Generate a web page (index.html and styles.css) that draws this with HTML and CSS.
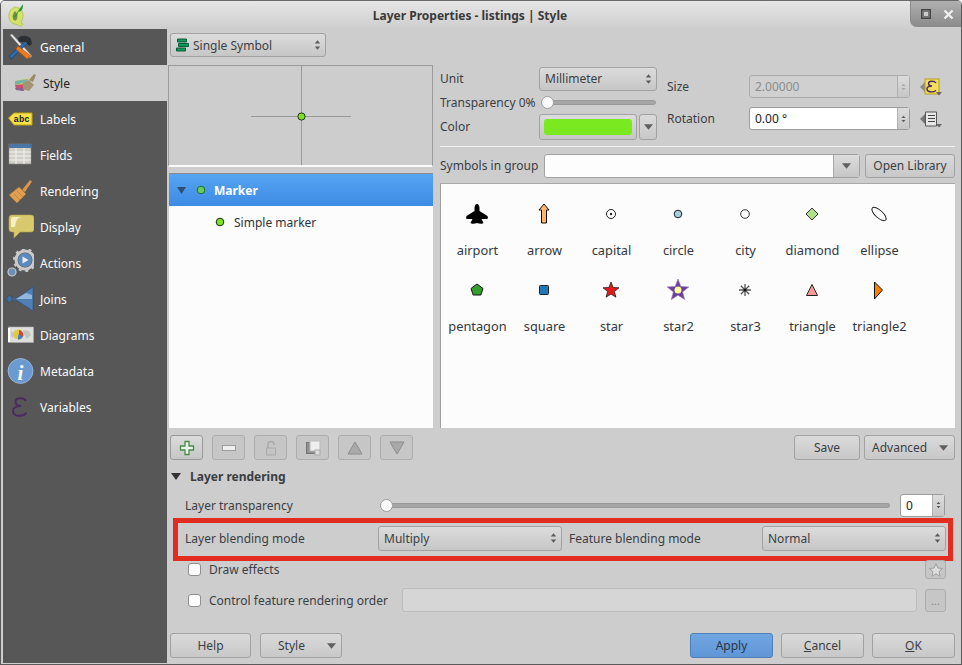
FILE: index.html
```html
<!DOCTYPE html>
<html lang="en">
<head>
<meta charset="utf-8">
<title>Layer Properties - listings | Style</title>
<link rel="stylesheet" href="styles.css">
</head>
<body>
<svg class="defs" aria-hidden="true">
  <symbol id="updown" viewBox="0 0 9 14"><path d="M4.500 1 8 5H1zM1 9h7l-3.500 4z" fill="#5c5c5c"/></symbol>
  <symbol id="down" viewBox="0 0 11 7"><path d="M0 0h11L5.500 7z" fill="#5f5f5f"/></symbol>
</svg>
<div class="window">
  <header class="titlebar">
    <svg class="appicon" viewBox="0 0 18 24"><path d="M8 4C4 5 1 10 2 15c1 4 3 6 6 6l5 2c2 0 3-1 3-2l-2-1c1-3 2-5 2-8 0-3-2-6-4-7z" fill="#d3e26a" stroke="#a9bd45" stroke-width=".7"/><path d="M8 8c-2 2-3 5-2 8 1 2 3 2 4 0 1-3 0-6-2-8z" fill="#7f8f3a"/><path d="M6 15 16 1c0 3 0 5-2 7l-3 1-1 4z" fill="#2f9a35"/></svg>
    <div class="title">Layer Properties - listings | Style</div>
    <div class="winbtns">
      <svg width="10" height="10" viewBox="0 0 10 10"><rect x=".75" y=".75" width="8.500" height="8.500" fill="none" stroke="#444" stroke-width="1.500"/><rect x="2.500" y="2.500" width="5" height="5" fill="#ccc" stroke="#777"/></svg>
      <svg width="11" height="11" viewBox="0 0 11 11"><path d="M1.500 1.500l8 8M9.500 1.500l-8 8" stroke="#eee" stroke-width="2.400"/></svg>
    </div>
  </header>
  <div class="content">
    <nav class="sidebar">
      <div class="navitem"><svg class="navicon" viewBox="0 0 28 28"><path d="M4 2 24 25l2-2L6 1z" fill="#e8e8e8" stroke="#777" stroke-width=".5"/><path d="M22 6 3 23l2 3L24 8z" fill="#2e6cb0" stroke="#173c6a" stroke-width=".7"/><path d="M12 13l-2 3 11 10 4-3z" fill="#f07a1c" stroke="#a94e0c" stroke-width=".6"/><path d="M12 5c4-3 9-3 13 1l1 5-3 2-3-4-4 0-3 0z" fill="#2c2f33"/></svg><span>General</span></div>
      <div class="navitem active"><svg class="navicon" viewBox="0 0 28 28"><path d="M6 12 20 9l-2 8-11 1z" fill="#d8d36a"/><path d="M6 12 19 10l-1 3-12 3z" fill="#76b3a5"/><path d="M6 16l11-1-2 7-8-2z" fill="#c84f72"/><path d="M6 19l9 0-1 3-7-1z" fill="#8c5f8f"/><path d="M14 14l6-3 5 5-5 6-6-2z" fill="#a39474"/><path d="M20 11l5-6 2 1-3 7z" fill="#9a8a68"/></svg><span>Style</span></div>
      <div class="navitem"><svg class="navicon" viewBox="0 0 28 28"><path d="M2.500 13 8 8h18v12H8z" fill="#f4e14a" stroke="#bda10f"/><text x="7.500" y="17" class="abc">abc</text></svg><span>Labels</span></div>
      <div class="navitem"><svg class="navicon" viewBox="0 0 28 28"><rect x="3" y="3" width="22" height="20" fill="#d0d0c8" stroke="#8a8a86" stroke-width=".6"/><rect x="3" y="3" width="22" height="4" fill="#4c76a8"/><path d="M3 11h22M3 15h22M3 19h22M10 7v16M18 7v16" stroke="#f2f2ec"/></svg><span>Fields</span></div>
      <div class="navitem"><svg class="navicon" viewBox="0 0 28 28"><path d="M16 13 24 3l2 1.500L19 15z" fill="#d9954a"/><path d="M3 18 13 10l7 7-9 9z" fill="#e0a050" stroke="#a96f2a" stroke-width=".5"/><path d="M5 20l6 6M8 17l6 6M11 14l6 6" stroke="#b97a33" stroke-width=".7"/></svg><span>Rendering</span></div>
      <div class="navitem"><svg class="navicon" viewBox="0 0 28 28"><path d="M6 2h19q3 0 3 3v11q0 3-3 3H14l-6 6 0-6H6q-3 0-3-3V5q0-3 3-3z" fill="#d9c96e" stroke="#b5a548" stroke-width=".6"/><path d="M6 4h12c-6 0-8 2-9 10H5V6z" fill="#f6efc4"/></svg><span>Display</span></div>
      <div class="navitem"><svg class="navicon" viewBox="0 0 28 28"><circle cx="19" cy="11" r="9" fill="none" stroke="#c9c9c9" stroke-width="3"/><circle cx="19" cy="11" r="11" fill="none" stroke="#c9c9c9" stroke-width="2" stroke-dasharray="3 3.900"/><circle cx="19" cy="11" r="7" fill="#5b8ac0"/><path d="M16.500 7.500v7l6-3.500z" fill="#f0f0f0"/><circle cx="6" cy="23" r="4" fill="#6a8fb8" stroke="#c9c9c9" stroke-width="1.200"/></svg><span>Actions</span></div>
      <div class="navitem"><svg class="navicon" viewBox="0 0 28 28"><path d="M27 2v24l-7-5-1 0-10-7 11-7 7-5z" fill="#4f7fb5" stroke="#23497a" stroke-width=".5"/><path d="M10 14 20 8l6 2v4z" fill="#93b6dc"/><ellipse cx="3.500" cy="14" rx="2.800" ry="3.300" fill="#3f6fa8" stroke="#1f3f6c" stroke-width=".5"/><path d="M6 14h4" stroke="#3f6fa8"/></svg><span>Joins</span></div>
      <div class="navitem"><svg class="navicon" viewBox="0 0 28 28"><rect x="2.500" y="6" width="25" height="15.500" fill="#dedfda" stroke="#aaa" stroke-width=".6"/><path d="M3 7v14" stroke="#fff" stroke-width="2"/><path d="M17 9l6 1 2 4-4 4-3-5zM5 10l3 2-1 5-2-2z" fill="#c4c6c0"/><circle cx="12" cy="13.500" r="5" fill="#e3c947"/><path d="M13 9a5 5 0 0 1 4 7l-4-2z" fill="#c84a3c"/><path d="M12 13.500l5 2a5 5 0 0 1-5 3z" fill="#4a7fbd"/></svg><span>Diagrams</span></div>
      <div class="navitem"><svg class="navicon" viewBox="0 0 28 28"><circle cx="14.500" cy="14" r="12.500" fill="#6a9ad0" stroke="#b9d2ee" stroke-width=".6"/><text x="14.500" y="23" class="info">i</text></svg><span>Metadata</span></div>
      <div class="navitem"><svg class="navicon" viewBox="0 0 28 28"><path d="M20 8C18 4.500 9.500 4 9.500 9c0 2.500 2.500 4 5.500 4-4 0-8 1.500-8 5 0 6 9.500 6 13.500 2" fill="none" stroke="#4b2a63" stroke-width="2"/></svg><span>Variables</span></div>
    </nav>
    <main class="main">
      <div class="toprow">
        <div class="combo rendererbox"><svg class="rendericon" viewBox="0 0 13 14"><path d="M1.500 1h9v3h-9zM2.500 5.500h10v3h-10zM.5 10h9v3h-9z" fill="#0b9c5c" stroke="#0a5c38"/></svg><span class="grow">Single Symbol</span><svg class="arrows"><use href="#updown"/></svg></div>
      </div>
      <div class="split">
        <section class="leftcol">
          <div class="preview"><svg width="265" height="99" viewBox="0 0 265 99"><path d="M132.500 0v99M82 50.500h100" stroke="#9a9a9a"/><circle cx="132.500" cy="50.500" r="3.600" fill="#7ae41f" stroke="#22331a"/></svg></div>
          <div class="tree">
            <div class="treehead"><svg class="twisty" width="9" height="7" viewBox="0 0 9 7"><path d="M0 0h9L4.500 7z" fill="#2f4f72"/></svg><svg width="10" height="10" viewBox="0 0 10 10"><circle cx="5" cy="5" r="3.800" fill="#67cd55" stroke="#1e6a3c"/></svg><b>Marker</b></div>
            <div class="treerow"><svg width="10" height="10" viewBox="0 0 10 10"><circle cx="5" cy="5" r="3.800" fill="#7ae41f" stroke="#1c2a14"/></svg><span>Simple marker</span></div>
          </div>
        </section>
        <section class="rightcol">
          <div class="props">
            <div class="propsleft">
              <div class="prow prow-unit"><span class="plabel">Unit</span><div class="combo unitbox"><span class="grow">Millimeter</span><svg class="arrows"><use href="#updown"/></svg></div></div>
              <div class="prow prow-trans"><span>Transparency 0%</span><div class="slider shortslider"><i class="knob"></i></div></div>
              <div class="prow prow-color"><span class="plabel">Color</span><div class="colorbtn"><i></i></div><div class="btn arrowbtn"><svg class="drop"><use href="#down"/></svg></div></div>
            </div>
            <div class="propsright">
              <div class="srow"><span class="slabel">Size</span><div class="spin disabled"><span class="grow">2.00000</span><div class="stepper"><svg class="arrows faint"><use href="#updown"/></svg></div></div><svg class="ddbtn" viewBox="0 0 24 20"><path d="M1 10l5-5v10z" fill="#8a8a8a"/><rect x="6" y="2" width="14" height="15" fill="#f2dd5c" stroke="#b59f18"/><path d="M17 6C15.500 3.500 9.500 3.500 9.500 6.500c0 1.500 1.500 2.500 3.500 2.500-2.500 0-5 1-5 3 0 3.500 6.500 3.500 9 1.500" fill="none" stroke="#4b2a63" stroke-width="1.400"/><path d="M17 15h6l-3 3.500z" fill="#666"/></svg></div>
              <div class="srow"><span class="slabel">Rotation</span><div class="spin"><span class="grow">0.00 °</span><div class="stepper"><svg class="arrows"><use href="#updown"/></svg></div></div><svg class="ddbtn" viewBox="0 0 24 20"><path d="M1 10l5-5v10z" fill="#777"/><path d="M6.500 3h11v14h-11z" fill="#e8e8e8" stroke="#555"/><path d="M9 6.500h7M9 9.500h7M9 12.500h7" stroke="#444"/><path d="M17 15h6l-3 3.500z" fill="#666"/></svg></div>
            </div>
          </div>
          <div class="hr"></div>
          <div class="grouprow"><span>Symbols in group</span><div class="editcombo"><div class="grow"></div><div class="editdrop"><svg class="drop"><use href="#down"/></svg></div></div><div class="btn libbtn">Open Library</div></div>
          <div class="symbols">
            <div class="sym"><svg viewBox="0 0 24 24"><path d="M12 2c1.500 0 2.500 2 2.500 4v3l8 5c.5 1 .5 2 0 3h-6l2 4c-1 1-4 1-6.500 0-2.500 1-5.500 1-6.500 0l2-4h-6c-.5-1-.5-2 0-3l8-5V6c0-2 1-4 2.500-4z"/></svg><span>airport</span></div>
            <div class="sym"><svg viewBox="0 0 24 24"><path d="M12 2l5 6h-2.500v13h-5V8H7z" fill="#fdb66a" stroke="#111"/></svg><span>arrow</span></div>
            <div class="sym"><svg viewBox="0 0 24 24"><circle cx="12" cy="12" r="4.500" fill="#fff" stroke="#222"/><circle cx="12" cy="12" r="1.200" fill="#222"/></svg><span>capital</span></div>
            <div class="sym"><svg viewBox="0 0 24 24"><circle cx="12" cy="12" r="3.800" fill="#a6cee3" stroke="#222"/></svg><span>circle</span></div>
            <div class="sym"><svg viewBox="0 0 24 24"><circle cx="12" cy="12" r="4.300" fill="#fff" stroke="#333"/></svg><span>city</span></div>
            <div class="sym"><svg viewBox="0 0 24 24"><path d="M12 6l6 6-6 6-6-6z" fill="#b2df8a" stroke="#333"/></svg><span>diamond</span></div>
            <div class="sym"><svg viewBox="0 0 24 24"><ellipse cx="12" cy="12" rx="9" ry="3.700" transform="rotate(42 12 12)" fill="#fff" stroke="#222"/></svg><span>ellipse</span></div>
            <div class="sym"><svg viewBox="0 0 24 24"><path d="M12 6l6 4.500-2.200 6.500H8.200L6 10.500z" fill="#33a02c" stroke="#111"/></svg><span>pentagon</span></div>
            <div class="sym"><svg viewBox="0 0 24 24"><rect x="7.500" y="7.500" width="9" height="9" rx="1" fill="#1f78b4" stroke="#222"/></svg><span>square</span></div>
            <div class="sym"><svg viewBox="0 0 24 24"><path d="M12 4l2.100 5.500 5.900.3-4.600 3.700 1.500 5.700-4.900-3.200-4.900 3.200 1.500-5.700L4 9.800l5.900-.3z" fill="#e31a1c" stroke="#222" stroke-width=".8"/></svg><span>star</span></div>
            <div class="sym"><svg viewBox="0 0 24 24"><path d="M12 1l2.800 7.500 8 .4-6.200 5 2.100 7.700-6.700-4.400-6.700 4.400 2.100-7.700-6.200-5 8-.4z" fill="#6a3d9a" stroke="#9a7ec0" stroke-width=".7"/><circle cx="12" cy="12" r="3.500" fill="#ffff99"/></svg><span>star2</span></div>
            <div class="sym"><svg viewBox="0 0 24 24"><path d="M12 6v12M6 12h12M7.800 7.800l8.400 8.400M16.200 7.800l-8.400 8.400" stroke="#555" stroke-width="1.300"/><circle cx="12" cy="12" r="1.300" fill="#111"/></svg><span>star3</span></div>
            <div class="sym"><svg viewBox="0 0 24 24"><path d="M12 6.500l5.500 11h-11z" fill="#fb9a99" stroke="#222"/></svg><span>triangle</span></div>
            <div class="sym"><svg viewBox="0 0 24 24"><path d="M7.500 4l8 8-8 9z" fill="#ff7f00" stroke="#111"/></svg><span>triangle2</span></div>
          </div>
        </section>
      </div>
      <div class="toolbar">
        <div class="tool tool-on"><svg viewBox="0 0 16 16"><path d="M6 1.500h4v4.500h4.500v4H10v4.500H6V10H1.500V6H6z" fill="#e9f3e6" stroke="#4a8b4d" stroke-width="1.300"/></svg></div>
        <div class="tool"><svg viewBox="0 0 16 16"><rect x="1.500" y="5.500" width="13" height="5" fill="#eee" stroke="#9c9c9c"/></svg></div>
        <div class="tool"><svg viewBox="0 0 16 16"><path d="M5 8V4.500a3 3 0 0 1 6 0V5" fill="none" stroke="#aaa" stroke-width="1.500"/><rect x="3.500" y="8" width="9" height="7" fill="#c4c4c4" stroke="#aaa"/></svg></div>
        <div class="tool"><svg viewBox="0 0 16 16"><rect x="1.500" y="2.500" width="10" height="11" fill="#8f8f8f" stroke="#777"/><rect x="5" y="1" width="10" height="10" fill="#eee" stroke="#bbb"/><rect x="10" y="10" width="5" height="5" fill="#ddd" stroke="#aaa"/></svg></div>
        <div class="tool"><svg viewBox="0 0 16 16"><path d="M8 2l7 12H1z" fill="#a9a9a9" stroke="#8d8d8d"/></svg></div>
        <div class="tool"><svg viewBox="0 0 16 16"><path d="M1 2h14L8 14z" fill="#a9a9a9" stroke="#8d8d8d"/></svg></div>
        <div class="grow"></div>
        <div class="btn savebtn">Save</div>
        <div class="btn advbtn"><span class="grow">Advanced</span><svg class="drop"><use href="#down"/></svg></div>
      </div>
      <div class="grouphead"><svg width="10" height="7" viewBox="0 0 10 7"><path d="M0 0h10L5 7z" fill="#333"/></svg><b>Layer rendering</b></div>
      <div class="rendering">
        <div class="lrow lrow-trans"><span class="llabel">Layer transparency</span><div class="slider longslider"><i class="knob"></i></div><div class="spin zerospin"><span class="grow">0</span><div class="stepper"><svg class="arrows"><use href="#updown"/></svg></div></div></div>
        <div class="redbox">
          <span class="blabel1">Layer blending mode</span>
          <div class="combo blendbox"><span class="grow">Multiply</span><svg class="arrows"><use href="#updown"/></svg></div>
          <span class="blabel2">Feature blending mode</span>
          <div class="combo blendbox"><span class="grow">Normal</span><svg class="arrows"><use href="#updown"/></svg></div>
        </div>
        <div class="lrow lrow-effects"><i class="check"></i><span class="grow">Draw effects</span><div class="tool starbtn"><svg viewBox="0 0 18 18"><path d="M9 2l2.100 4.800 5.200.5-3.900 3.500 1.100 5.200L9 13.300 4.500 16l1.100-5.200L1.700 7.300l5.200-.5z" fill="#ddd" stroke="#999"/></svg></div></div>
        <div class="lrow lrow-order"><i class="check"></i><span>Control feature rendering order</span><div class="grow orderinput"></div><div class="tool dotsbtn">...</div></div>
      </div>
      <div class="footer">
        <div class="btn helpbtn">Help</div>
        <div class="btn stylebtn"><span class="grow">Style</span><svg class="drop"><use href="#down"/></svg></div>
        <div class="grow"></div>
        <div class="btn dlgbtn applybtn">Apply</div>
        <div class="btn dlgbtn"><span><u>C</u>ancel</span></div>
        <div class="btn dlgbtn"><span><u>O</u>K</span></div>
      </div>
    </main>
  </div>
</div>
</body>
</html>
```

FILE: styles.css
```css
* { box-sizing: border-box; }
html, body { margin: 0; padding: 0; }
body { width: 962px; height: 665px; overflow: hidden; font-family: "Noto Sans", sans-serif; font-size: 12px; color: #3b3f44; }
.defs { display: none; }
.grow { flex: 1 1 auto; min-width: 0; }
.window { width: 962px; height: 665px; display: flex; flex-direction: column; background: #cdcdcd; border: 1px solid #5a5a5a; border-top-color: #6a6a6a; border-radius: 5px 5px 0 0; overflow: hidden; }
.titlebar { height: 28px; flex: none; display: flex; align-items: flex-start; background: linear-gradient(#e6e6e6, #cecece); }
.appicon { width: 18px; height: 24px; margin: 2px 0 0 6px; flex: none; }
.title { flex: 1; text-align: center; font-weight: 700; font-size: 12px; line-height: 29px; color: #3a3a3a; padding-left: 5px; }
.winbtns { width: 51px; height: 26px; flex: none; display: flex; align-items: center; gap: 12px; padding-left: 10px; background: linear-gradient(#b0b0b0, #8a8a8a); border-bottom-left-radius: 7px; border-left: 1px solid #8a8a8a; }
.content { flex: 1; display: flex; min-height: 0; padding: 0 0 1px 2px; }
.sidebar { width: 164px; flex: none; background: #575757; }
.navitem { height: 36px; display: flex; align-items: center; gap: 6px; padding-left: 3px; color: #fbfbfb; }
.navitem.active { background: #cdcdcd; color: #222; padding-left: 6px; }
.navicon { width: 28px; height: 28px; flex: none; }
.abc { font: 700 9px "Liberation Mono", monospace; fill: #222; }
.info { font: italic 700 21px "Liberation Serif", serif; fill: #fff; text-anchor: middle; }
.main { flex: 1; min-width: 0; display: flex; flex-direction: column; padding-right: 6px; }
.toprow { height: 36px; padding: 4px 0 0 3px; flex: none; }
.combo { display: flex; align-items: center; height: 24px; padding: 0 3px 0 5px; border: 1px solid #a2a2a2; border-radius: 3px; background: linear-gradient(#dcdcdc, #c6c6c6); }
.arrows { width: 7px; height: 12px; flex: none; margin-right: 1px; }
.arrows.faint { opacity: .35; }
.rendererbox { width: 156px; }
.rendericon { width: 13px; height: 14px; margin-right: 4px; flex: none; }
.split { height: 365px; flex: none; display: flex; }
.leftcol { width: 266px; padding-left: 1px; margin-right: 7px; flex: none; display: flex; flex-direction: column; }
.preview { height: 102px; flex: none; width: 265px; border-top: 1px solid #9a9a9a; border-left: 1px solid #9a9a9a; border-right: 1px solid #9a9a9a; border-bottom: 2px solid #fafafa; overflow: hidden; }
.preview svg { display: block; }
.tree { margin: 6px 0 0 1px; height: 255px; flex: none; width: 264px; background: #fcfcfc; border-top: 1px solid #8b8b8b; }
.treehead { height: 32px; display: flex; align-items: center; padding-left: 8px; background: linear-gradient(#55a4f2, #3e8be4); color: #fff; }
.twisty { margin-right: 10px; }
.treehead b { margin-left: 8px; }
.treerow { height: 32px; display: flex; align-items: center; padding-left: 46px; gap: 9px; color: #2f3338; }
.rightcol { flex: 1; min-width: 0; display: flex; flex-direction: column; }
.props { height: 81px; display: flex; flex: none; }
.propsleft { width: 218px; flex: none; margin-right: 9px; }
.prow { display: flex; align-items: center; }
.prow-unit { height: 25px; margin-top: 1px; }
.plabel { width: 99px; flex: none; }
.unitbox { width: 118px; }
.prow-trans { height: 23px; }
.prow-trans span { width: 99px; flex: none; white-space: nowrap; }
.shortslider { width: 115px; margin-left: 2px; flex: none; }
.slider { height: 5px; background: #a6a6a6; border-radius: 3px; border: 1px solid #9a9a9a; position: relative; }
.knob { position: absolute; left: -1px; top: -5px; width: 13px; height: 13px; border-radius: 50%; background: #fafafa; border: 1px solid #9c9c9c; }
.prow-color { height: 26px; }
.prow-color .plabel { margin-bottom: 2px; }
.colorbtn { width: 98px; height: 26px; padding: 4px; border: 1px solid #a2a2a2; border-radius: 3px; background: linear-gradient(#dcdcdc, #c6c6c6); flex: none; }
.colorbtn i { display: block; height: 16px; background: #7ae91f; border-radius: 3px; }
.btn { display: flex; align-items: center; justify-content: center; border: 1px solid #a2a2a2; border-radius: 3px; background: linear-gradient(#dadada, #c8c8c8); flex: none; }
.arrowbtn { width: 18px; height: 26px; margin-left: 2px; }
.drop { width: 9px; height: 6px; flex: none; }
.propsright { flex: 1; min-width: 0; padding-top: 10px; }
.srow { display: flex; align-items: center; height: 23px; margin-bottom: 9px; }
.slabel { width: 82px; flex: none; }
.spin { width: 161px; height: 23px; flex: none; display: flex; align-items: center; padding-left: 5px; background: #fff; border: 1px solid #9c9c9c; border-radius: 3px; color: #222; }
.spin.disabled { background: #d0d0d0; color: #8c8c8c; border-color: #acacac; }
.stepper { width: 12px; height: 100%; flex: none; display: flex; align-items: center; justify-content: center; background: linear-gradient(#dcdcdc, #c6c6c6); border-left: 1px solid #b0b0b0; }
.stepper .arrows { width: 5px; height: 10px; margin: 0; }
.ddbtn { width: 24px; height: 20px; margin-left: 9px; flex: none; }
.hr { height: 1px; flex: none; background: #f0f0f0; margin-bottom: 6px; }
.grouprow { display: flex; align-items: center; height: 25px; flex: none; }
.grouprow > span { width: 104px; flex: none; }
.editcombo { width: 316px; height: 24px; flex: none; display: flex; background: #fdfdfd; border: 1px solid #a2a2a2; border-radius: 3px; }
.editdrop { width: 26px; display: flex; align-items: center; justify-content: center; background: linear-gradient(#dcdcdc, #c6c6c6); border-left: 1px solid #a8a8a8; }
.libbtn { width: 90px; height: 24px; margin-left: 5px; }
.symbols { margin-top: 5px; height: 245px; flex: none; display: grid; grid-template-columns: repeat(7, 67px); grid-auto-rows: 58px; row-gap: 18px; padding: 18px 0 0 3px; background: #fcfcfc; border-top: 1px solid #a8a8a8; border-left: 1px solid #a0a0a0; align-content: start; }
.sym { display: flex; flex-direction: column; align-items: center; color: #34383d; font-size: 12.8px; }
.sym svg { width: 24px; height: 24px; flex: none; margin: 0 2px 15px 0; }
.sym span { line-height: 18px; white-space: nowrap; }
.toolbar { height: 26px; margin-top: 5px; padding-left: 3px; display: flex; flex: none; gap: 9px; }
.tool { width: 33px; height: 25px; flex: none; display: flex; align-items: center; justify-content: center; border: 1px solid #adadad; border-radius: 3px; background: #c6c6c6; }
.tool svg { width: 16px; height: 16px; }
.tool-on { background: linear-gradient(#dcdcdc, #c6c6c6); border-color: #999; }
.savebtn { width: 66px; height: 25px; }
.advbtn { width: 91px; height: 25px; margin-left: -5px; padding: 0 6px 0 7px; }
.grouphead { height: 18px; margin-top: 6px; flex: none; display: flex; align-items: center; padding-left: 4px; gap: 9px; color: #3a3d42; }
.rendering { flex: none; }
.lrow { display: flex; align-items: center; }
.lrow-trans { height: 24px; margin-top: 8px; padding-left: 18px; }
.llabel { width: 195px; flex: none; }
.longslider { width: 510px; flex: none; }
.zerospin { width: 45px; margin-left: 10px; height: 23px; }
.redbox { margin: 1px 3px 0 6px; height: 43px; border: 5px solid #e32c20; display: flex; align-items: center; padding: 0 0 3px 7px; width: 780px; }
.blabel1 { width: 193px; flex: none; }
.blabel2 { width: 193px; flex: none; margin-left: 7px; }
.blendbox { width: 184px; height: 25px; flex: none; }
.check { width: 13px; height: 13px; flex: none; background: #fcfcfc; border: 1px solid #8f8f8f; border-radius: 3px; margin-right: 8px; }
.lrow-effects { height: 20px; padding-left: 21px; padding-right: 9px; margin-top: -2px; }
.starbtn { width: 21px; height: 19px; margin-top: 1px; border-radius: 3px; }
.lrow-order { height: 24px; margin-top: 9px; padding-left: 21px; padding-right: 9px; }
.orderinput { height: 24px; margin-left: 14px; background: #d6d6d6; border: 1px solid #bcbcbc; border-radius: 3px; }
.dotsbtn { width: 21px; height: 23px; margin-left: 8px; color: #8a8a8a; font-size: 11px; }
.footer { height: 25px; margin-top: 21px; padding-left: 3px; flex: none; display: flex; gap: 9px; }
.helpbtn { width: 81px; }
.stylebtn { width: 82px; padding: 0 5px 0 17px; }
.dlgbtn { width: 83px; margin-left: -1px; }
.applybtn { background: linear-gradient(#70a6e2, #5f96d6); border-color: #4f7fb5; color: #2b3644; }
```
